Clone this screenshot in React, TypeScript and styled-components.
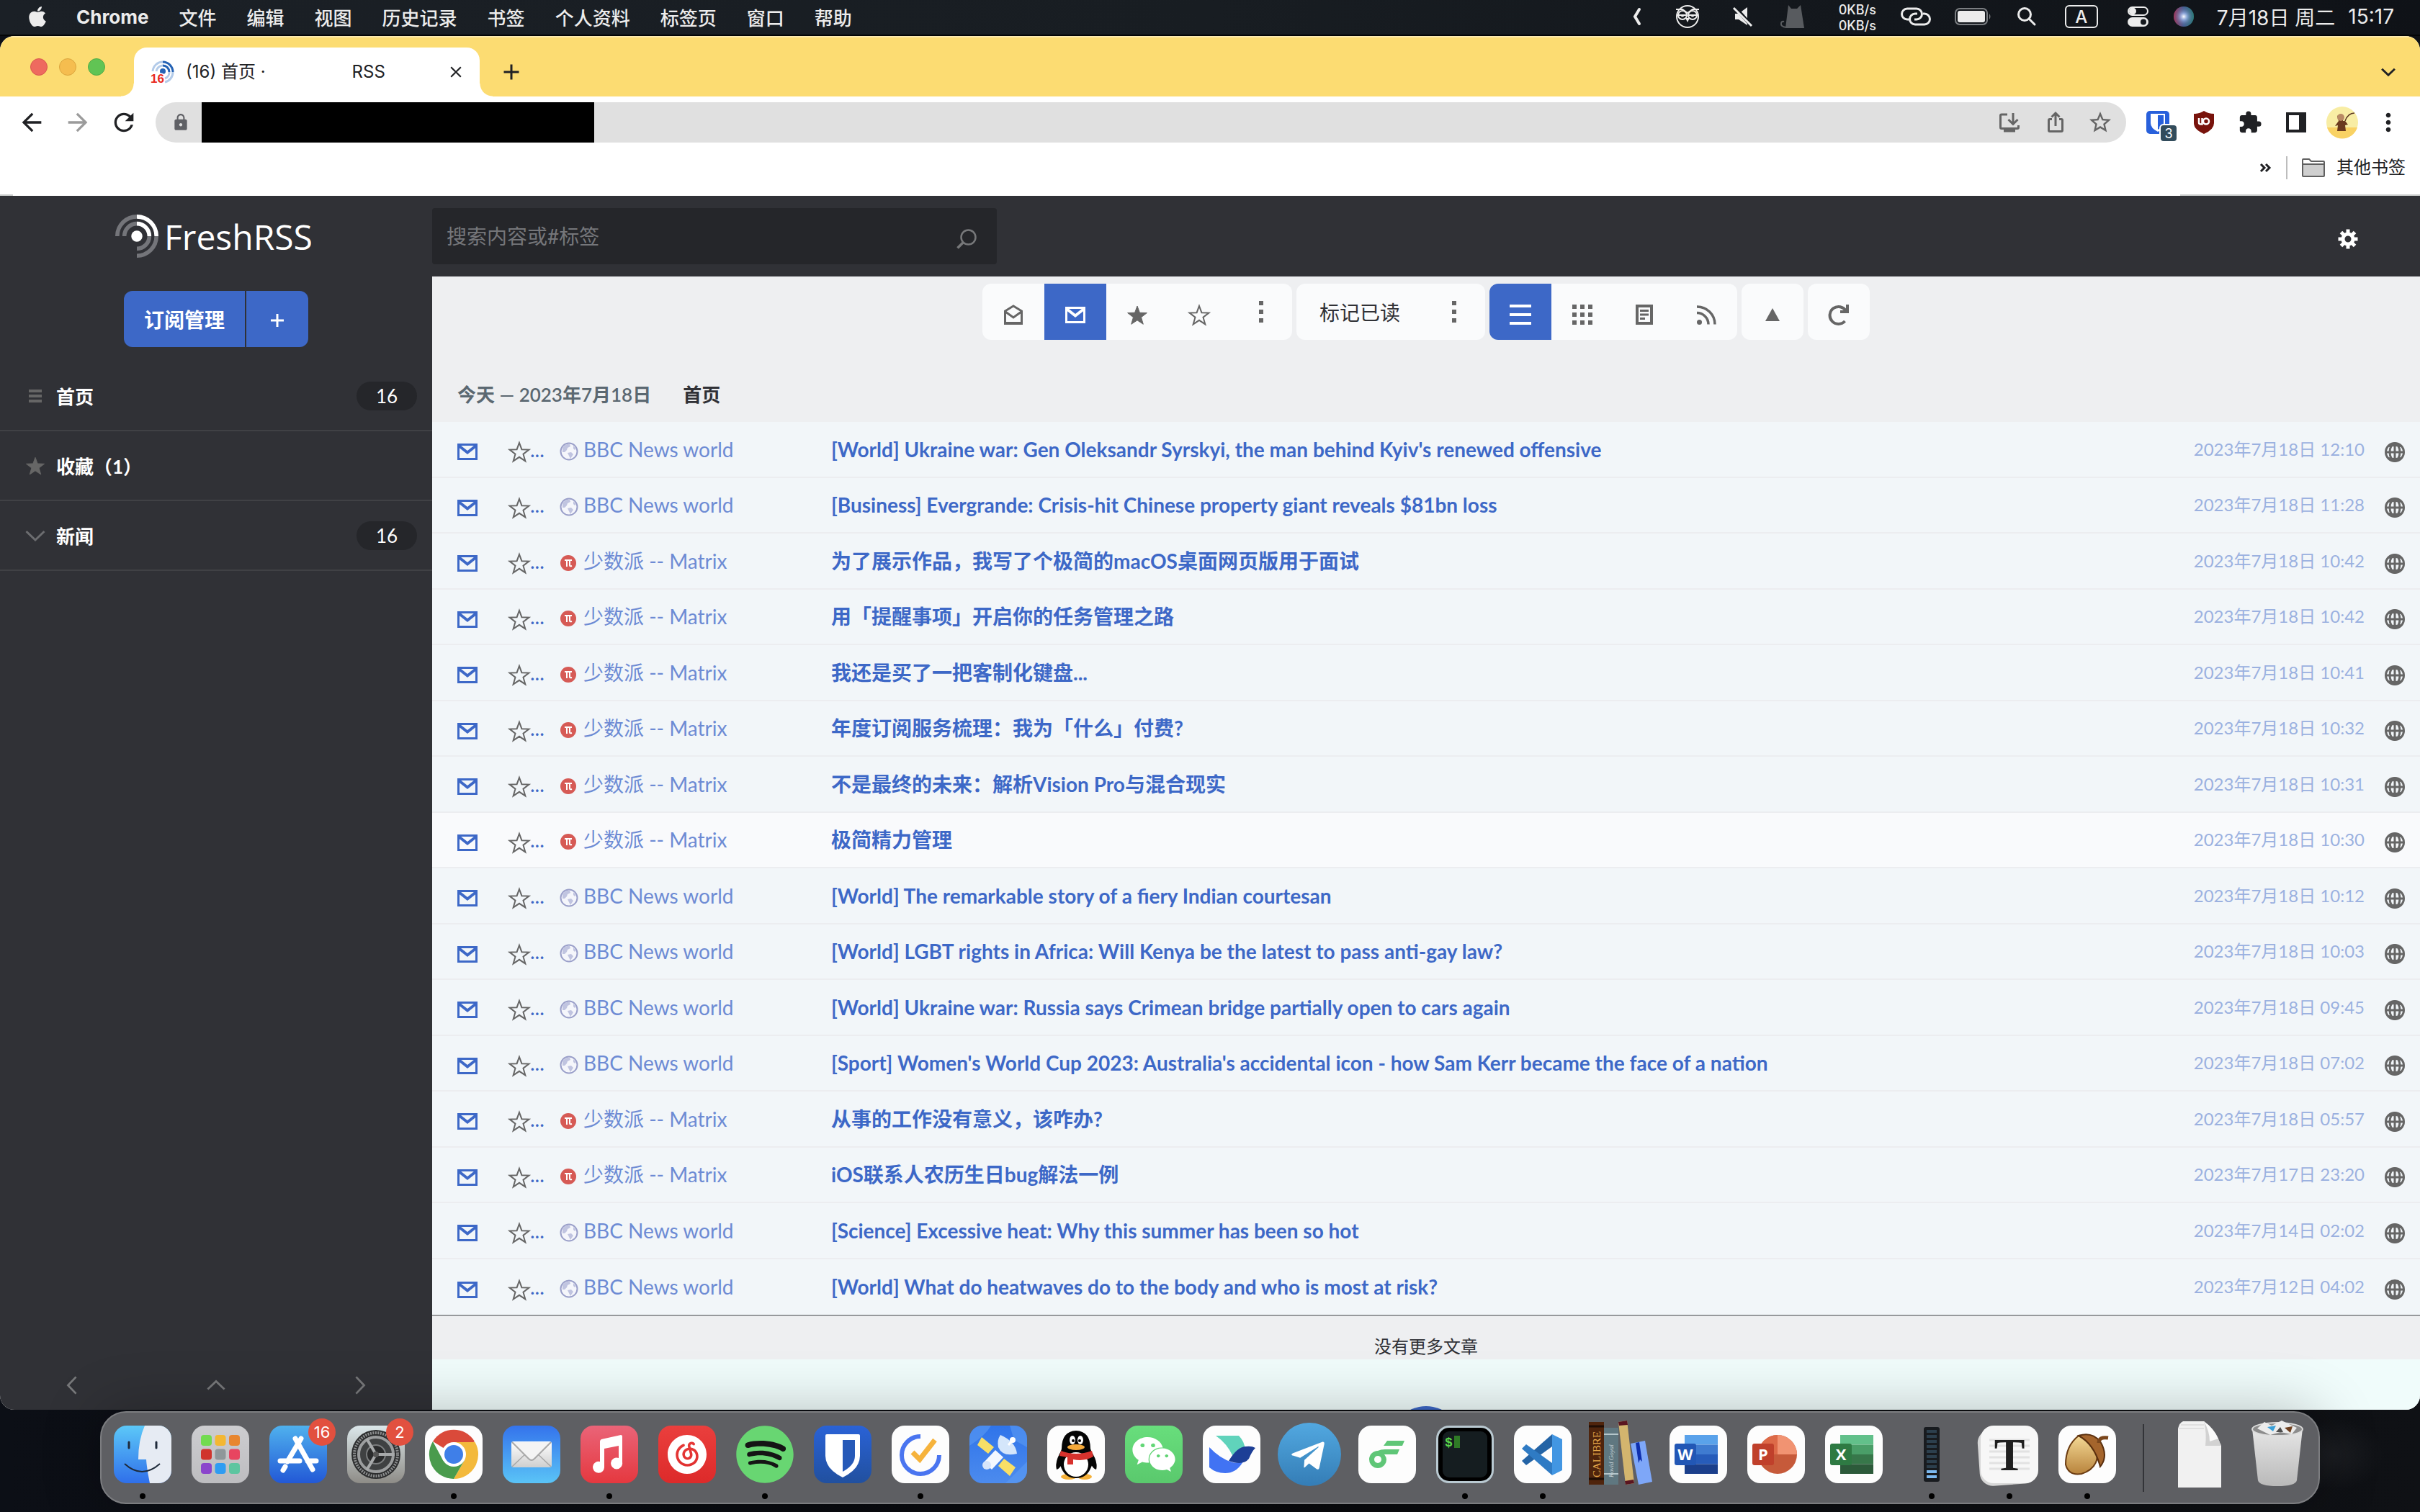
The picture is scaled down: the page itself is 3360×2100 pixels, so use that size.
import React from "react";
import styled, { createGlobalStyle } from "styled-components";
import { FaApple, FaSpotify, FaWeixin, FaTelegramPlane } from "react-icons/fa";
import { MdArrowBack, MdArrowForward, MdRefresh, MdLock, MdExtension, MdMoreVert, MdClose, MdAdd, MdOutlineStarBorder } from "react-icons/md";
import { SiNeteasecloudmusic } from "react-icons/si";

const UI = `Inter, "Noto Sans CJK SC", sans-serif`;
const READER = `Lato, "Noto Sans CJK SC", sans-serif`;
const BLUE = "#3d68c7";
const DARK = "#303136";
const DEEP = "#25262a";
const GREY = "#666666";

const Global = createGlobalStyle`
  *, *::before, *::after { box-sizing: border-box; }
  html, body, #root { height: 100%; margin: 0; }
  body { background: #0a0c10; font-family: ${UI}; }
  button, input { font: inherit; border: 0; padding: 0; background: none; color: inherit; border-radius: 0; outline: 0; }
  a { color: inherit; text-decoration: none; }
  ul { list-style: none; margin: 0; padding: 0; }
  svg { display: block; flex: none; overflow: visible; }
`;

const Desktop = styled.div`
  min-height: 100vh;
  display: flex;
  flex-direction: column;
  background:
    radial-gradient(ellipse 70px 50px at calc(100% - 120px) calc(100% - 80px), #1b1d21, transparent),
    linear-gradient(90deg, #0c0f16, #090a0d 50%, #0f1115);
`;

/* ---------- system menu bar ---------- */
const MenuBar = styled.header`
  height: 50px;
  padding: 0 36px 2px;
  display: flex;
  align-items: center;
  justify-content: space-between;
  color: #ececec;
  font-size: 26px;
  background: linear-gradient(90deg, #1b2026, #181d22 50%, #0f1217);
  border-bottom: 2px solid #040506;
`;
const MenuList = styled.nav`
  display: flex;
  align-items: center;
  gap: 42px;
`;
const AppleMenu = styled.button`
  margin-right: -4px;
`;
const MenuItem = styled.button<{ $strong?: boolean }>`
  font-weight: ${(p) => (p.$strong ? 700 : 500)};
  white-space: nowrap;
`;
const StatusList = styled.div`
  display: flex;
  align-items: center;
`;
const Status = styled.span<{ $lead: number }>`
  display: flex;
  margin-left: ${(p) => p.$lead}px;
  white-space: nowrap;
`;
const Clock = styled.time<{ $lead: number }>`
  margin-left: ${(p) => p.$lead}px;
  font-size: 28px;
  white-space: nowrap;
`;
const NetSpeed = styled.span<{ $lead: number }>`
  margin-left: ${(p) => p.$lead}px;
  padding-top: 4px;
  font-size: 18px;
  line-height: 22px;
  font-weight: 500;
`;
const InputMode = styled.span<{ $lead: number }>`
  margin-left: ${(p) => p.$lead}px;
  width: 46px;
  height: 32px;
  border: 2px solid #ececec;
  border-radius: 6px;
  display: grid;
  place-items: center;
  font-size: 24px;
  font-weight: 500;
`;

/* ---------- browser chrome ---------- */
const Window = styled.section`
  flex: 1;
  display: flex;
  flex-direction: column;
  border-radius: 20px;
  overflow: hidden;
  background: #fff;
`;
const TabStrip = styled.div`
  height: 84px;
  background: #fcdc72;
  border-top: 2px solid #fbe9ae;
  display: flex;
  align-items: flex-end;
  padding-right: 34px;
`;
const Lights = styled.div`
  width: 186px;
  padding-left: 42px;
  padding-bottom: 29px;
  display: flex;
  gap: 16px;
`;
const Light = styled.button<{ $c: string; $b: string }>`
  width: 24px;
  height: 24px;
  border-radius: 50%;
  background: ${(p) => p.$c};
  border: 1px solid ${(p) => p.$b};
`;
const Tab = styled.div`
  position: relative;
  width: 480px;
  height: 68px;
  border-radius: 18px 18px 0 0;
  background: #fff;
  display: flex;
  align-items: center;
  padding: 0 20px 0 23px;
  font-size: 24px;
  color: #202124;
  &::before, &::after {
    content: "";
    position: absolute;
    bottom: 0;
    width: 18px;
    height: 18px;
  }
  &::before { left: -18px; background: radial-gradient(circle at 0 0, transparent 17px, #fff 18px); }
  &::after { right: -18px; background: radial-gradient(circle at 100% 0, transparent 17px, #fff 18px); }
`;
const TabTitle = styled.span`
  flex: 1;
  margin-left: 16px;
  display: flex;
  align-items: baseline;
  gap: 120px;
  line-height: 32px;
  white-space: pre;
`;
const StripButton = styled.button<{ $push?: boolean }>`
  display: flex;
  align-items: center;
  height: 68px;
  margin-left: ${(p) => (p.$push ? "auto" : "26px")};
  color: #202124;
`;
const IconButton = styled.button<{ $c?: string; $low?: boolean }>`
  display: flex;
  padding-top: ${(p) => (p.$low ? 8 : 0)}px;
  color: ${(p) => p.$c ?? "#202124"};
`;
const AddressBar = styled.div`
  height: 72px;
  padding: 8px 24px;
  display: flex;
  align-items: center;
  gap: 24px;
`;
const Omnibox = styled.label`
  flex: 1;
  height: 56px;
  border-radius: 28px;
  background: #e0e0e0;
  display: flex;
  align-items: center;
  gap: 24px;
  padding: 0 18px 0 22px;
`;
const UrlField = styled.input`
  width: 545px;
  height: 56px;
  margin-left: -8px;
  margin-right: auto;
  background: #000;
  color: #000;
`;
const Extensions = styled.div`
  width: 384px;
  display: grid;
  grid-template-columns: repeat(6, 64px);
  justify-items: center;
  align-items: center;
  margin: 0 -12px 0 -12px;
`;
const ExtBadge = styled.span`
  position: absolute;
  right: -12px;
  bottom: -12px;
  width: 26px;
  height: 26px;
  border: 2px solid #fff;
  border-radius: 6px;
  background: #324c5c;
  color: #fff;
  font-size: 18px;
  display: grid;
  place-items: center;
`;
const ExtSlot = styled.button`
  position: relative;
  display: flex;
`;
const Bookmarks = styled.div`
  height: 66px;
  padding: 0 20px 10px;
  border-bottom: 2px solid #c9cccb;
  border-image: linear-gradient(90deg, #c9cccb 19px, #fff 19px calc(100% - 334px), #c9cccb 0) 1;
  display: flex;
  justify-content: flex-end;
  align-items: center;
  font-size: 24px;
  line-height: 32px;
  color: #202124;
`;
const BookmarkRule = styled.span`
  width: 2px;
  height: 32px;
  background: #bdbdbd;
  margin: 0 20px 0 22px;
`;
const Folder = styled.button`
  display: flex;
  align-items: center;
  gap: 16px;
`;

/* ---------- reader ---------- */
const Reader = styled.main`
  flex: 1;
  display: grid;
  grid-template-columns: 600px 1fr;
  background: ${DARK};
  font-family: ${READER};
`;
const Sidebar = styled.aside`
  display: flex;
  flex-direction: column;
  align-items: center;
  color: #fff;
`;
const Brand = styled.a`
  height: 112px;
  width: 100%;
  padding-left: 160px;
  display: flex;
  align-items: center;
  gap: 8px;
  font: 48px "Open Sans", sans-serif;
`;
const Manage = styled.div`
  margin: 20px 0;
  display: flex;
  gap: 2px;
  height: 78px;
  border-radius: 12px;
  overflow: hidden;
  font-size: 28px;
  font-weight: 700;
`;
const ManageButton = styled.button<{ $w: number }>`
  width: ${(p) => p.$w}px;
  background: ${BLUE};
  display: grid;
  place-items: center;
`;
const Categories = styled.ul`
  width: 100%;
`;
const Category = styled.li`
  height: 97px;
  border-bottom: 2px solid #404145;
  display: flex;
  align-items: center;
  padding: 0 21px 0 35px;
  font-size: 26px;
  font-weight: 700;
`;
const CategoryLink = styled.a`
  display: flex;
  align-items: center;
  gap: 15px;
  flex: 1;
`;
const Count = styled.span`
  width: 84px;
  height: 40px;
  border-radius: 20px;
  background: ${DEEP};
  display: grid;
  place-items: center;
  font-weight: 400;
`;
const SideNav = styled.div`
  margin-top: auto;
  width: 100%;
  height: 68px;
  display: grid;
  grid-template-columns: repeat(3, 1fr);
  justify-items: center;
  align-items: center;
`;
const Column = styled.div`
  display: flex;
  flex-direction: column;
  min-width: 0;
`;
const TopBar = styled.div`
  height: 112px;
  display: flex;
  align-items: center;
  justify-content: space-between;
  padding-right: 86px;
`;
const SearchBox = styled.form`
  width: 784px;
  height: 78px;
  padding: 0 28px 0 20px;
  border-radius: 4px;
  background: ${DEEP};
  display: flex;
  align-items: center;
  input { flex: 1; font-size: 28px; color: #fff; }
  input::placeholder { color: #75767a; opacity: 1; }
`;
const Content = styled.section`
  position: relative;
  flex: 1;
  display: flex;
  flex-direction: column;
  overflow: hidden;
  background: #eeeff1;
`;
const ActionBar = styled.div`
  padding: 10px 0 36px;
  display: flex;
  justify-content: center;
  gap: 6px;
`;
const Group = styled.div`
  display: flex;
  height: 78px;
  border-radius: 12px;
  overflow: hidden;
  background: #fafbfc;
  color: ${GREY};
`;
const Action = styled.button<{ $on?: boolean; $wide?: boolean; $flat?: boolean }>`
  width: ${(p) => (p.$wide ? 176 : 86)}px;
  padding-top: ${(p) => (p.$flat || p.$wide ? 0 : 8)}px;
  display: grid;
  place-items: center;
  font-size: 28px;
  background: ${(p) => (p.$on ? BLUE : "transparent")};
  color: ${(p) => (p.$on ? "#fff" : p.$wide ? DARK : GREY)};
`;
const DayTitle = styled.h2`
  margin: 0;
  height: 78px;
  padding: 0 0 2px 35px;
  display: flex;
  align-items: center;
  gap: 44px;
  font-size: 26px;
  font-weight: 600;
  color: #5b6871;
  b { color: ${DARK}; font-weight: 600; }
`;
const Articles = styled.ul`
  flex: 1;
  display: grid;
  grid-auto-rows: 1fr;
`;
const Article = styled.li<{ $hover?: boolean }>`
  display: grid;
  grid-template-columns: 71px 71px 377px 1fr auto 28px;
  align-items: center;
  padding: 0 21px 0 35px;
  background: ${(p) => (p.$hover ? "#f9fafc" : "#f2f6f9")};
  border-bottom: 2px solid #ecedf0;
  color: ${BLUE};
  font-size: 28px;
  line-height: 36px;
  white-space: nowrap;
  &:last-child { border-bottom: 0; }
`;
const RowIcon = styled.button`
  display: flex;
  padding-top: 8px;
`;
const StarCell = styled.button`
  display: flex;
  align-items: center;
  color: ${GREY};
  svg { margin-top: 8px; }
  span { color: ${BLUE}; }
`;
const Feed = styled.a`
  display: flex;
  align-items: center;
  gap: 7px;
  color: #6d8bd4;
  svg { margin-top: 6px; }
`;
const Title = styled.a`
  font-weight: 700;
`;
const Time = styled.time`
  margin-right: 28px;
  font-size: 24px;
  color: #9bb1e0;
`;
const EndNote = styled.p`
  margin: 0;
  height: 62px;
  padding-top: 24px;
  border-top: 2px solid #97999c;
  text-align: center;
  font-size: 24px;
  line-height: 36px;
  color: ${DARK};
`;
const PageEnd = styled.div`
  height: 70px;
  background: #f0fcfb;
`;
const Bubble = styled.span`
  position: absolute;
  left: 50%;
  top: calc(100% - 5px);
  width: 100px;
  height: 100px;
  margin-left: -50px;
  border-radius: 50%;
  background: ${BLUE};
`;

/* ---------- dock ---------- */
const DockArea = styled.footer`
  height: 142px;
  padding-top: 2px;
  display: flex;
  justify-content: center;
  align-items: flex-start;
`;
const Dock = styled.div`
  position: relative;
  height: 129px;
  padding: 18px 3px 0;
  border: 2px solid #7c7d80;
  border-radius: 36px;
  background: #5e5f63;
  box-shadow: 0 0 80px rgba(0, 0, 0, 0.25);
  display: flex;
`;
const DockItem = styled.button`
  position: relative;
  width: 108px;
  display: flex;
  flex-direction: column;
  align-items: center;
  justify-content: flex-start;
  gap: 14px;
`;
const RunDot = styled.i`
  width: 8px;
  height: 8px;
  border-radius: 50%;
  background: #000;
`;
const Alert = styled.span`
  position: absolute;
  left: 68px;
  top: -10px;
  width: 38px;
  height: 38px;
  border-radius: 50%;
  background: #e2503f;
  color: #fff;
  font-size: 22px;
  display: grid;
  place-items: center;
`;
const Divider = styled.span`
  width: 2px;
  height: 94px;
  margin: -2px 23px 0;
  background: #333438;
`;

/* ---------- drawings ---------- */
const STAR = "M15 2 L18.4 11.2 L28.4 11.6 L20.5 17.7 L23.3 27.3 L15 21.8 L6.7 27.3 L9.5 17.7 L1.6 11.6 L11.6 11.2 Z";
const Star = ({ fill = "none", w = 2 }: { fill?: string; w?: number }) => (
  <svg width="30" height="29" viewBox="0 0 30 29"><path d={STAR} fill={fill} stroke="currentColor" strokeWidth={w} /></svg>
);
const Envelope = () => (
  <svg width="28" height="23" viewBox="0 0 28 23" fill="none" stroke="currentColor">
    <rect x="1.5" y="1.5" width="25" height="20" strokeWidth="3" />
    <path d="M2 3 L14 12.5 L26 3" strokeWidth="4" />
  </svg>
);
const OpenEnvelope = () => (
  <svg width="26" height="28" viewBox="0 0 26 28" fill="none" stroke="currentColor" strokeWidth="3">
    <path d="M1.5 26 V9 L13 2 L24.5 9 V26 Z" /><path d="M2 10 L13 18 L24 10" /><path d="M0 26 H26" strokeWidth="4" />
  </svg>
);
const Dots = () => (
  <svg width="6" height="30" viewBox="0 0 6 30" fill="currentColor"><path d="M0 0h6v6H0zM0 12h6v6H0zM0 24h6v6H0z" /></svg>
);
const Lines = () => (
  <svg width="30" height="28" viewBox="0 0 30 28" fill="currentColor"><path d="M0 0h30v4H0zM0 12h30v4H0zM0 24h30v4H0z" /></svg>
);
const Grid9 = () => (
  <svg width="28" height="28" viewBox="0 0 28 28" fill="currentColor">
    {[0, 11, 22].map((y) => [0, 11, 22].map((x) => <rect key={`${x}-${y}`} x={x} y={y} width="6" height="6" />))}
  </svg>
);
const Page = () => (
  <svg width="24" height="28" viewBox="0 0 24 28" fill="none" stroke="currentColor">
    <path d="M2 2 H22 V26 H2 Z" strokeWidth="4" /><path d="M6 8.5 H18 M6 14 H18 M6 19.5 H13" strokeWidth="3" />
  </svg>
);
const Rss = () => (
  <svg width="27" height="27" viewBox="0 0 27 27" fill="none" stroke="currentColor" strokeWidth="3.5">
    <circle cx="3.5" cy="23.5" r="3.5" fill="currentColor" stroke="none" />
    <path d="M0 10.5 A16 16 0 0 1 16 26.5 M0 2 A24.5 24.5 0 0 1 25 26.5" />
  </svg>
);
const Reload = () => (
  <svg width="28" height="28" viewBox="0 0 28 28" fill="none" stroke="currentColor">
    <path d="M24 9 A12 12 0 1 0 22.5 23" strokeWidth="4" /><path d="M26 0 V10 H16" strokeWidth="4" />
  </svg>
);
const Globe = () => (
  <svg width="28" height="28" viewBox="0 0 28 28" fill="none" stroke={GREY}>
    <circle cx="14" cy="14" r="12.5" strokeWidth="3" />
    <path d="M14 1 V27 M1 14 H27" strokeWidth="3" />
    <ellipse cx="14" cy="14" rx="7" ry="12" strokeWidth="3" />
    <path d="M4 6 Q14 -4 24 6 L21 7 Q14 5 7 7 Z M4 22 Q14 32 24 22 L21 21 Q14 23 7 21 Z" fill={GREY} stroke="none" />
  </svg>
);
const WorldIcon = () => (
  <svg width="26" height="26" viewBox="0 0 26 26">
    <circle cx="13" cy="13" r="11.5" fill="#f5f6fb" stroke="#9a9fc9" strokeWidth="2" />
    <path d="M4 8 Q8 2 14 3 L15 6 L11 8 L10 11 L7 14 L4 14 Z M11 15 L16 14 L19 17 L17 20 L15 23 L13 19 Z M19 5 L23 9 L21 11 L19 9 Z" fill="#c0c4e0" />
  </svg>
);
const PiIcon = () => (
  <svg width="26" height="26" viewBox="0 0 26 26">
    <circle cx="12" cy="13" r="11" fill="#d65a55" />
    <path d="M7 9 H17 M10 9 V18 M14 9 V16 Q14 18 17 17" stroke="#fff" strokeWidth="2" fill="none" />
  </svg>
);
const Signal = ({ size, bright, dim }: { size: number; bright: string; dim: string }) => (
  <svg width={size} height={size} viewBox="0 0 256 256" fill="none" strokeWidth="24">
    <circle cx="128" cy="128" r="33" fill={bright} />
    <path stroke={dim} d="M12 128 A116 116 0 0 1 128 12 M54 128 A74 74 0 0 1 128 54 M244 128 A116 116 0 0 1 128 244 M202 128 A74 74 0 0 1 128 202" />
    <path stroke={bright} d="M128 12 A116 116 0 0 1 244 128 M128 54 A74 74 0 0 1 202 128" />
  </svg>
);
const Chevron = ({ turn, size = 28, w = 2 }: { turn: number; size?: number; w?: number }) => (
  <svg width={size} height={size} viewBox="0 0 28 28" fill="none" stroke="currentColor" strokeWidth={w}>
    <path transform={`rotate(${turn} 14 14)`} d="M1.5 8 L14 20 L26.5 8" />
  </svg>
);
const Gear = () => (
  <svg width="28" height="28" viewBox="-14 -14 28 28">
    {[0, 45, 90, 135].map((a) => <rect key={a} x="-2.5" y="-13.5" width="5" height="27" fill="#fff" transform={`rotate(${a})`} />)}
    <circle r="7" fill={DARK} stroke="#fff" strokeWidth="5" />
  </svg>
);

/* ---------- dock drawings, each on an 80 unit tile ---------- */
const Tile = ({ fill = "#fdfdfd", children }: { fill?: string; children?: React.ReactNode }) => (
  <svg width="80" height="80" viewBox="0 0 80 80">
    <rect width="80" height="80" rx="18" fill={fill} />
    {children}
  </svg>
);
const Gradients = () => (
  <svg width="0" height="0" aria-hidden>
    <defs>
      {([
        ["gFinder", "#5cc8f8", "#2f6fea"], ["gPad", "#cdcdd0", "#bdbdc0"], ["gStore", "#4fb1ee", "#2258d6"],
        ["gPrefs", "#dbe7ea", "#8e8c87"], ["gMail", "#3473ec", "#5ac4f7"], ["gMusic", "#ea6478", "#e5383f"],
        ["gNet", "#ea3f3d", "#dd2a2a"], ["gBit", "#2a62d6", "#21509f"], ["gMap", "#2f74ea", "#4c8bee"],
        ["gChat", "#68de7c", "#5ac96d"], ["gTele", "#52a8e0", "#347db6"], ["gEnv", "#ffffff", "#cfcfcf"],
        ["gNut", "#f4d995", "#b8833c"], ["gBin", "#e6e6e6", "#b9b9b9"],
      ] as const).map(([id, a, b]) => (
        <linearGradient key={id} id={id} x1="0" y1="0" x2="0" y2="1"><stop offset="0" stopColor={a} /><stop offset="1" stopColor={b} /></linearGradient>
      ))}
    </defs>
  </svg>
);
const Finder = () => (
  <Tile fill="url(#gFinder)">
    <path d="M43 0 H62 A18 18 0 0 1 80 18 V62 A18 18 0 0 1 62 80 H50 Q46 62 45 47 H34 Q34 20 43 0Z" fill="#e6ebf3" />
    <path d="M21 23 V31 M59 23 V31" stroke="#1e2a3a" strokeWidth="3" strokeLinecap="round" />
    <path d="M15 53 Q39 75 64 53" stroke="#1e2a3a" strokeWidth="2" fill="none" />
  </Tile>
);
const Launchpad = () => (
  <Tile fill="url(#gPad)">
    {["#72db50", "#f3b732", "#e8862f", "#d0342c", "#8f979a", "#e84560", "#8b45cc", "#2f9cf2", "#5cc5a0"].map((c, i) => (
      <rect key={c} x={13 + (i % 3) * 19.5} y={13 + Math.floor(i / 3) * 19.5} width="15" height="15" rx="4" fill={c} />
    ))}
  </Tile>
);
const AppStore = () => (
  <Tile fill="url(#gStore)">
    <path d="M44 18 L25 50 M36 18 L60 61 M15 49 H42 M53 49 H65 M22 57 L19 62" stroke="#fff" strokeWidth="7" strokeLinecap="round" />
  </Tile>
);
const Prefs = () => (
  <Tile fill="url(#gPrefs)">
    <circle cx="40" cy="40" r="34" fill="#2c2d2e" />
    <circle cx="40" cy="40" r="30" fill="none" stroke="#8b8d8e" strokeWidth="4" strokeDasharray="2 1.5" />
    <circle cx="40" cy="40" r="24" fill="#3f4142" stroke="#9b9d9e" strokeWidth="4" />
    <circle cx="40" cy="40" r="13" fill="#2a2b2c" stroke="#7b7d7e" strokeWidth="2" />
    <path d="M40 40 H66 M40 40 L27 18 M40 40 L27 62" stroke="#a7a9aa" strokeWidth="4" />
    <circle cx="40" cy="40" r="4" fill="#555" />
  </Tile>
);
const Chrome = () => (
  <Tile>
    <path d="M40 40 L11 22 A34 34 0 0 1 69 22 Z" fill="#da4a3a" />
    <path d="M40 23 H69.5 A34 34 0 0 1 40 74 L54.7 48.5 Z" fill="#f3b93c" />
    <path d="M25.3 48.5 L11 22 A34 34 0 0 0 40 74 L54.7 48.5 Z" fill="#4a9b4d" />
    <circle cx="40" cy="40" r="17" fill="#fff" /><circle cx="40" cy="40" r="13" fill="#3f7fe8" />
  </Tile>
);
const Mail = () => (
  <Tile fill="url(#gMail)">
    <rect x="12" y="22" width="56" height="36" rx="3" fill="url(#gEnv)" />
    <path d="M13 57 L33 38 M67 57 L47 38" stroke="#a8a8a8" strokeWidth="1.5" />
    <path d="M13 23 L36 46 Q40 50 44 46 L67 23" fill="#f4f4f4" stroke="#a8a8a8" strokeWidth="2" />
  </Tile>
);
const Music = () => (
  <Tile fill="url(#gMusic)">
    <path d="M27 22 Q27 20 29 19 L56 13 Q58 13 58 15 V51 A8 8 0 1 1 53 45 V28 L33 32 V57 A8 8 0 1 1 27 50 Z" fill="#fff" />
  </Tile>
);
const NetEase = () => (
  <Tile fill="url(#gNet)"><SiNeteasecloudmusic x={13} y={13} size={54} color="#fff" /></Tile>
);
const Spotify = () => (
  <svg width="80" height="80" viewBox="0 0 80 80"><circle cx="40" cy="40" r="38" fill="#151515" /><FaSpotify x={-1} y={-1} size={82} color="#68d672" /></svg>
);
const Bitwarden = () => (
  <Tile fill="url(#gBit)">
    <path d="M18 12 H62 Q64 12 64 14 V42 Q64 60 40 72 Q16 60 16 42 V14 Q16 12 18 12Z" fill="#fff" /><path d="M40 20 H57 V42 Q57 55 40 64Z" fill="#2659b8" />
  </Tile>
);
const TickTick = () => (
  <Tile>
    <path d="M40 15 A26 26 0 1 0 66 41" stroke="#4a75f0" strokeWidth="6" fill="none" />
    <path d="M29 37 L39 47 L60 20" stroke="#f6b33c" strokeWidth="7" fill="none" />
  </Tile>
);
const Satellite = () => (
  <Tile fill="url(#gMap)">
    <path d="M0 28 Q22 14 30 0 H18 A18 18 0 0 0 0 18Z M50 80 L80 50 V62 A18 18 0 0 1 62 80Z M56 0 L62 20 L80 30 V18 A18 18 0 0 0 62 0Z" fill="#5b9bf2" opacity="0.6" />
    <path d="M17 16 L34 30 L26 39 L11 27Z M48 46 L64 58 L56 70 L40 56Z" fill="#f8df66" />
    <path d="M36 34 L47 44 L31 61 L20 51Z" fill="#f3f8ff" /><circle cx="24" cy="55" r="6" fill="#d7e5fa" />
    <path d="M43 13 Q64 22 66 39 Q46 44 40 30Q38 20 43 13Z" fill="#d4e6fb" /><path d="M54 27 L61 19" stroke="#fff" strokeWidth="3" /><circle cx="60" cy="20" r="4" fill="#fff" />
  </Tile>
);
const QQ = () => (
  <Tile>
    <ellipse cx="30" cy="71" rx="11" ry="4" fill="#f5b13a" /><ellipse cx="52" cy="71" rx="10" ry="4" fill="#f5b13a" />
    <path d="M20 34 Q10 50 13 61 Q17 60 20 54 M60 34 Q71 50 68 61 Q64 60 61 54" fill="#050505" />
    <path d="M40 7 Q60 8 60 32 Q66 50 60 60 Q54 73 40 73 Q26 73 20 60 Q15 50 20 32 Q20 8 40 7Z" fill="#050505" />
    <ellipse cx="40" cy="54" rx="17" ry="17" fill="#fff" />
    <ellipse cx="35" cy="20" rx="4" ry="6" fill="#fff" /><ellipse cx="46" cy="20" rx="4" ry="6" fill="#fff" />
    <circle cx="36" cy="21" r="2" fill="#000" /><circle cx="45" cy="21" r="2" fill="#000" />
    <ellipse cx="40" cy="30" rx="12" ry="4" fill="#f5a93a" />
    <path d="M19 35 Q40 43 62 35 L64 43 Q52 50 36 47 V54 H28 V44 L17 42Z" fill="#d8322d" />
  </Tile>
);
const WeChat = () => (
  <Tile fill="url(#gChat)"><FaWeixin x={9} y={9} size={62} color="#fff" /></Tile>
);
const Lark = () => (
  <Tile>
    <path d="M18 14 H50 Q58 22 59 34 Q50 35 42 43 Q34 25 18 14Z" fill="#60d3bb" />
    <path d="M9 30 Q24 46 41 51 Q50 53 57 48 Q48 66 31 66 Q18 66 9 58Z" fill="#4173f3" />
    <path d="M36 49 Q48 29 60 29 Q68 28 73 31 Q68 36 64 46 Q56 56 36 49Z" fill="#1d3f96" />
  </Tile>
);
const Telegram = () => (
  <svg width="80" height="80" viewBox="0 0 80 80"><circle cx="40" cy="40" r="44" fill="url(#gTele)" /><FaTelegramPlane x={12} y={16} size={52} color="#fff" /></svg>
);
const Flomo = () => (
  <Tile>
    <path d="M40 21 H64 L61 28 H35Z M37 33 H57 L54 40 H36 Q39 44 39 47 A12 12 0 1 1 27 35 Q31 33 37 33Z" fill="#5fc677" />
    <circle cx="27" cy="47" r="5" fill="#fdfdfd" />
  </Tile>
);
const Terminal = () => (
  <svg width="80" height="80" viewBox="0 0 80 80">
    <rect width="80" height="80" rx="18" fill="#b9c9d1" /><rect x="3" y="3" width="74" height="74" rx="15" fill="#000" /><rect x="9" y="8" width="62" height="64" rx="9" fill="#151d20" />
    <text x="12" y="29" fill="#5bd64b" fontSize="18" fontFamily="Liberation Mono, monospace" fontWeight="700">$</text><rect x="25" y="14" width="8" height="17" fill="#2f7a26" />
  </svg>
);
const Code = () => (
  <Tile>
    <path d="M53 12 L67 19 V62 L53 69Z" fill="#4296e2" />
    <path d="M53 12 V29 L17 55 L11 49Z" fill="#2464a6" /><path d="M53 69 V52 L17 26 L11 32Z" fill="#2f7bc4" />
  </Tile>
);
const Calibre = () => (
  <svg width="80" height="80" viewBox="0 0 80 80">
    <rect x="-4" y="-5" width="21" height="87" fill="#4f240c" /><path d="M-4 1 H17 M-4 74 H17" stroke="#1f0d04" strokeWidth="3" />
    <text transform="translate(12 72) rotate(-90)" fill="#e8a94b" fontSize="15" fontFamily="Liberation Serif, serif">CALIBRE</text>
    <rect x="17" y="3" width="20" height="79" fill="#5f7780" /><path d="M17 12 H37 M17 67 H37" stroke="#b5c6cb" strokeWidth="2" />
    <text transform="translate(30 72) rotate(-90)" fill="#c7d4d8" fontSize="9" fontStyle="italic" fontFamily="Liberation Serif, serif">Kovid Goyal</text>
    <path d="M37 -5 L49 -7 L59 80 L47 82Z" fill="#d3b56e" /><path d="M37 -5 L49 -7 L50 -1 L38 0Z M46 77 L58 75 L59 80 L47 82Z" fill="#5a1520" />
    <path d="M54 25 L74 21 L84 78 L65 82Z" fill="#7ea7f8" /><path d="M61 24 L66 23 L70 50 L67 47 L65 52Z" fill="#0e2fae" />
  </svg>
);
const Office = ({ letter, tones, badge, round }: { letter: string; tones: string[]; badge: string; round?: boolean }) => (
  <Tile>
    {round ? (
      <g><circle cx="42" cy="40" r="27" fill={tones[2]} /><path d="M42 13 A27 27 0 0 1 69 40 H42Z" fill={tones[0]} /><path d="M42 13 A27 27 0 0 0 15 40 H42Z" fill={tones[1]} /></g>
    ) : (
      <g>{tones.map((t, i) => <rect key={t} x="21" y={13 + i * 13.5} width="46" height="13.5" fill={t} />)}</g>
    )}
    <rect x="7" y="25" width="30" height="30" rx="3" fill={badge} />
    <text x="22" y="48" textAnchor="middle" fill="#fff" fontSize="22" fontWeight="700" fontFamily="Open Sans, sans-serif">{letter}</text>
  </Tile>
);
const Meter = () => (
  <svg width="80" height="80" viewBox="0 0 80 80">
    <rect x="29" y="2" width="22" height="76" rx="3" fill="#181b1f" />
    {[...Array(10)].map((_, i) => <rect key={i} x="33" y={6 + i * 7} width="14" height="4" fill={i > 7 ? "#7cb9f0" : "#2c3f4d"} />)}
  </svg>
);
const Typora = () => (
  <svg width="80" height="80" viewBox="0 0 80 80">
    <rect x="-3" y="4" width="80" height="78" rx="18" fill="#d7d7d7" transform="rotate(-4 40 40)" /><rect width="80" height="80" rx="18" fill="#f7f7f7" />
    <path d="M12 20 H68 M12 28 H68 M12 36 H68 M12 44 H68 M12 52 H68 M12 60 H68" stroke="#e2e2e2" strokeWidth="3" />
    <text x="40" y="62" textAnchor="middle" fill="#1f1f1f" fontSize="64" fontFamily="Liberation Serif, serif" fontWeight="700">T</text>
  </svg>
);
const Acorn = () => (
  <Tile>
    <path d="M28 14 Q44 12 54 40 Q54 60 32 67 Q14 70 10 54 Q10 28 28 14Z" fill="url(#gNut)" stroke="#6b3c12" strokeWidth="2" />
    <path d="M28 14 Q46 8 58 22 Q70 42 58 57 Q50 26 28 14Z" fill="#a5652c" stroke="#5a2f0e" strokeWidth="2" />
    <path d="M56 24 Q56 15 69 17" stroke="#7a461c" strokeWidth="5" fill="none" />
  </Tile>
);
const Papers = () => (
  <svg width="80" height="80" viewBox="0 0 80 80">
    <path d="M17 -6 H46 Q62 6 70 28 V86 H10 V4 Q12 -4 17 -6Z" fill="#f1f1f1" /><path d="M11 4 H46 M14 -1 H46" stroke="#cfcfcf" strokeWidth="1" />
    <path d="M46 -6 Q50 10 48 28 L70 28 Q62 6 46 -6Z" fill="#d2d2d2" /><path d="M46 -6 Q60 4 66 18 L54 22 Q54 8 46 -6Z" fill="#fafafa" />
  </svg>
);
const Trash = () => (
  <svg width="80" height="80" viewBox="0 0 80 80">
    <path d="M5 4 L13 76 Q15 84 40 84 Q65 84 67 76 L75 4Z" fill="url(#gBin)" />
    <ellipse cx="40" cy="5" rx="35" ry="9" fill="#8c8c8c" stroke="#dcdcdc" strokeWidth="2" />
    <path d="M12 4 L22 -5 L32 0 L46 -7 L56 -2 L67 3 L60 12 L44 9 L30 13Z" fill="#ececec" /><path d="M26 2 L34 8 L38 0Z" fill="#3a9fd8" /><path d="M50 3 L58 10 L61 1Z" fill="#70401f" /><path d="M38 9 L44 2 L48 9Z" fill="#4d4d4d" />
  </svg>
);

type DockEntry = { name: string; art: React.ReactNode; run?: boolean; alert?: string };
const apps: DockEntry[] = [
  { name: "Finder", art: <Finder />, run: true },
  { name: "Launchpad", art: <Launchpad /> },
  { name: "App Store", art: <AppStore />, alert: "16" },
  { name: "System Settings", art: <Prefs />, alert: "2" },
  { name: "Chrome", art: <Chrome />, run: true },
  { name: "Mail", art: <Mail /> },
  { name: "Music", art: <Music />, run: true },
  { name: "NetEase Music", art: <NetEase /> },
  { name: "Spotify", art: <Spotify />, run: true },
  { name: "Bitwarden", art: <Bitwarden /> },
  { name: "TickTick", art: <TickTick />, run: true },
  { name: "Satellite", art: <Satellite /> },
  { name: "QQ", art: <QQ /> },
  { name: "WeChat", art: <WeChat /> },
  { name: "Lark", art: <Lark /> },
  { name: "Telegram", art: <Telegram /> },
  { name: "flomo", art: <Flomo /> },
  { name: "iTerm", art: <Terminal />, run: true },
  { name: "VS Code", art: <Code />, run: true },
  { name: "calibre", art: <Calibre /> },
  { name: "Word", art: <Office letter="W" tones={["#5aa2ea", "#3f7bd0", "#275cba", "#1b3f8b"]} badge="#2257b5" /> },
  { name: "PowerPoint", art: <Office round letter="P" tones={["#f19372", "#dd6a48", "#c65a3a"]} badge="#c0402b" /> },
  { name: "Excel", art: <Office letter="X" tones={["#62c08a", "#4a9e68", "#37774a", "#2c5a3a"]} badge="#2e7a43" /> },
  { name: "Monitor", art: <Meter />, run: true },
  { name: "Typora", art: <Typora />, run: true },
  { name: "Acorn", art: <Acorn />, run: true },
];
const places: DockEntry[] = [
  { name: "Documents", art: <Papers /> },
  { name: "Trash", art: <Trash /> },
];

const DockButton = ({ entry }: { entry: DockEntry }) => (
  <DockItem aria-label={entry.name}>
    {entry.art}
    {entry.run && <RunDot />}
    {entry.alert && <Alert>{entry.alert}</Alert>}
  </DockItem>
);

const menus = ["文件", "编辑", "视图", "历史记录", "书签", "个人资料", "标签页", "窗口", "帮助"];

const BBC = "BBC News world";
const SSP = "少数派 -- Matrix";
const articles: [string, string, string][] = [
  [BBC, "[World] Ukraine war: Gen Oleksandr Syrskyi, the man behind Kyiv's renewed offensive", "2023年7月18日 12:10"],
  [BBC, "[Business] Evergrande: Crisis-hit Chinese property giant reveals $81bn loss", "2023年7月18日 11:28"],
  [SSP, "为了展示作品，我写了个极简的macOS桌面网页版用于面试", "2023年7月18日 10:42"],
  [SSP, "用「提醒事项」开启你的任务管理之路", "2023年7月18日 10:42"],
  [SSP, "我还是买了一把客制化键盘...", "2023年7月18日 10:41"],
  [SSP, "年度订阅服务梳理：我为「什么」付费?", "2023年7月18日 10:32"],
  [SSP, "不是最终的未来：解析Vision Pro与混合现实", "2023年7月18日 10:31"],
  [SSP, "极简精力管理", "2023年7月18日 10:30"],
  [BBC, "[World] The remarkable story of a fiery Indian courtesan", "2023年7月18日 10:12"],
  [BBC, "[World] LGBT rights in Africa: Will Kenya be the latest to pass anti-gay law?", "2023年7月18日 10:03"],
  [BBC, "[World] Ukraine war: Russia says Crimean bridge partially open to cars again", "2023年7月18日 09:45"],
  [BBC, "[Sport] Women's World Cup 2023: Australia's accidental icon - how Sam Kerr became the face of a nation", "2023年7月18日 07:02"],
  [SSP, "从事的工作没有意义，该咋办?", "2023年7月18日 05:57"],
  [SSP, "iOS联系人农历生日bug解法一例", "2023年7月17日 23:20"],
  [BBC, "[Science] Excessive heat: Why this summer has been so hot", "2023年7月14日 02:02"],
  [BBC, "[World] What do heatwaves do to the body and who is most at risk?", "2023年7月12日 04:02"],
];

const SystemMenu = () => (
  <MenuBar>
    <MenuList>
      <AppleMenu aria-label="Apple"><FaApple size={32} /></AppleMenu>
      <MenuItem $strong>Chrome</MenuItem>
      {menus.map((m) => <MenuItem key={m}>{m}</MenuItem>)}
    </MenuList>
    <StatusList>
      <Status $lead={0}><svg width="12" height="24" viewBox="0 0 12 24"><path d="M9 2 L3 12 L9 22" fill="none" stroke="#ececec" strokeWidth="4" strokeLinecap="round" /></svg></Status>
      <Status $lead={48}>
        <svg width="32" height="32" viewBox="0 0 32 32" fill="none" stroke="#ececec" strokeWidth="2">
          <circle cx="16" cy="16" r="15" /><circle cx="9" cy="14" r="6" /><circle cx="23" cy="14" r="6" /><path d="M0 6 H9 L16 11 L23 6 H32 M2 14 H15 M17 14 H30" /><path d="M13 18 L16 24 L19 18Z M6 14 H12 Q9 19 6 14 M20 14 H26 Q23 19 20 14" fill="#ececec" stroke="none" />
        </svg>
      </Status>
      <Status $lead={47}>
        <svg width="27" height="26" viewBox="0 0 27 26"><path d="M3 9 H8 L20 0 V25 L8 17 H3Z" fill="#ececec" /><path d="M2 -1 L27 27" stroke="#14181d" strokeWidth="5" /><path d="M1 1 L26 26" stroke="#ececec" strokeWidth="3" /></svg>
      </Status>
      <Status $lead={39}>
        <svg width="33" height="32" viewBox="0 0 33 32"><path d="M11 0 L15 5 H23 L28 0 L33 32 H7Z" fill="#585b5f" /><path d="M8 31 Q0 30 1 25 Q2 22 5 23" stroke="#585b5f" strokeWidth="2" fill="none" /></svg>
      </Status>
      <NetSpeed $lead={48}>0KB/s<br />0KB/s</NetSpeed>
      <Status $lead={34}>
        <svg width="42" height="26" viewBox="0 0 42 26" fill="none" stroke="#ececec" strokeWidth="3"><path d="M12 17 H9 A7.5 7.5 0 0 1 9 2 H22 A7.5 7.5 0 0 1 22 17 H19" /><path d="M23 9 H20 A7.5 7.5 0 0 0 20 24 H33 A7.5 7.5 0 0 0 33 9 H31" /></svg>
      </Status>
      <Status $lead={33}>
        <svg width="52" height="24" viewBox="0 0 52 24"><rect x="1" y="1" width="44" height="22" rx="6" fill="none" stroke="#7b7e82" strokeWidth="2" /><rect x="4" y="4" width="38" height="16" rx="3" fill="#ececec" /><path d="M48 8 Q51 12 48 16Z" fill="#7b7e82" /></svg>
      </Status>
      <Status $lead={35}>
        <svg width="26" height="26" viewBox="0 0 26 26" fill="none" stroke="#ececec" strokeWidth="3"><circle cx="10" cy="10" r="8.5" /><path d="M16 16 L24 24" strokeLinecap="round" /></svg>
      </Status>
      <InputMode $lead={40}>A</InputMode>
      <Status $lead={41}>
        <svg width="29" height="28" viewBox="0 0 29 28"><rect x="1" y="1" width="27" height="11" rx="5.5" fill="none" stroke="#ececec" strokeWidth="2" /><circle cx="7" cy="6.5" r="5" fill="#ececec" /><rect y="15" width="29" height="13" rx="6.5" fill="#ececec" /><circle cx="22" cy="21.5" r="4" fill="#14181d" /></svg>
      </Status>
      <Status $lead={35}>
        <svg width="28" height="28" viewBox="0 0 28 28"><defs><radialGradient id="siriGlow"><stop offset="0" stopColor="#fff" /><stop offset="0.35" stopColor="#9fb6e8" stopOpacity="0.7" /><stop offset="1" stopColor="#2b2f46" stopOpacity="0.2" /></radialGradient><linearGradient id="siriBase"><stop offset="0" stopColor="#c03a63" /><stop offset="0.5" stopColor="#4a6aa8" /><stop offset="1" stopColor="#2c8f86" /></linearGradient></defs><circle cx="14" cy="14" r="14" fill="url(#siriBase)" /><circle cx="14" cy="14" r="14" fill="url(#siriGlow)" /></svg>
      </Status>
      <Clock $lead={32}>7月18日 周二</Clock>
      <Clock $lead={18}>15:17</Clock>
    </StatusList>
  </MenuBar>
);

const BrowserBars = () => (
  <>
    <TabStrip>
      <Lights>
        <Light $c="#ee6a5f" $b="#d8584e" aria-label="Close" />
        <Light $c="#f5bd4f" $b="#dba53d" aria-label="Minimise" />
        <Light $c="#61c454" $b="#52ab46" aria-label="Zoom" />
      </Lights>
      <Tab>
        <svg width="33" height="32" viewBox="0 0 33 32">
          <g fill="none" strokeWidth="3"><path stroke="#b3cbe9" d="M3 15 A14 14 0 0 1 17 2 M8 15 A9 9 0 0 1 17 7 M31 16 A14 14 0 0 1 20 30 M26 16 A9 9 0 0 1 20 25" /><path stroke="#2563b5" d="M17 2 A14 14 0 0 1 31 16 M17 7 A9 9 0 0 1 26 16" /></g>
          <circle cx="17" cy="15" r="4" fill="#2563b5" />
          <text x="0" y="31" fontSize="17" fontWeight="700" fill="#e8281c" stroke="#fff" strokeWidth="3" paintOrder="stroke" fontFamily="Liberation Sans, sans-serif">16</text>
        </svg>
        <TabTitle><span>(16) 首页 ·</span><span>RSS</span></TabTitle>
        <IconButton aria-label="Close tab"><MdClose size={26} /></IconButton>
      </Tab>
      <StripButton aria-label="New tab"><MdAdd size={36} /></StripButton>
      <StripButton $push aria-label="Tab search"><Chevron turn={0} size={20} w={4} /></StripButton>
    </TabStrip>
    <AddressBar>
      <IconButton aria-label="Back"><MdArrowBack size={40} /></IconButton>
      <IconButton $c="#9b9b9b" aria-label="Forward"><MdArrowForward size={40} /></IconButton>
      <IconButton aria-label="Reload"><MdRefresh size={40} /></IconButton>
      <Omnibox>
        <IconButton as="span" $c="#5f6065"><MdLock size={26} /></IconButton>
        <UrlField aria-label="Address" />
        <IconButton aria-label="Install" $c="#656565">
          <svg width="40" height="40" viewBox="0 0 40 40" fill="none" stroke="currentColor" strokeWidth="3"><path d="M17 9 H9 Q7.5 9 7.5 10.5 V27 Q7.5 28.5 9 28.5 H31 Q32.5 28.5 32.5 27 V24" /><path d="M25 7 V22 M18.5 16 L25 22.5 L31.5 16" /><path d="M12 31 H28" strokeWidth="5" /></svg>
        </IconButton>
        <IconButton aria-label="Share" $c="#656565">
          <svg width="40" height="40" viewBox="0 0 40 40" fill="none" stroke="currentColor" strokeWidth="3"><path d="M15 15.5 H12 Q10.5 15.5 10.5 17 V31 Q10.5 32.5 12 32.5 H28 Q29.5 32.5 29.5 31 V17 Q29.5 15.5 28 15.5 H25 M20 25 V7 M14.5 12.5 L20 7 L25.5 12.5" /></svg>
        </IconButton>
        <IconButton aria-label="Bookmark" $c="#656565"><MdOutlineStarBorder size={36} /></IconButton>
      </Omnibox>
      <Extensions>
        <ExtSlot aria-label="Bitwarden">
          <svg width="32" height="32" viewBox="0 0 32 32"><rect width="32" height="32" rx="5" fill="#2860db" /><path d="M6 4 H26 V17 Q26 24 16 29 Q6 24 6 17Z" fill="#fff" /><path d="M16 6 H24 V17 Q24 22 16 26Z" fill="#2860db" /></svg>
          <ExtBadge>3</ExtBadge>
        </ExtSlot>
        <ExtSlot aria-label="uBlock Origin">
          <svg width="28" height="32" viewBox="0 0 28 32"><path d="M14 0 Q20 4 28 4 V17 Q28 26 14 32 Q0 26 0 17 V4 Q8 4 14 0Z" fill="#78130c" /><path d="M7 10 V16 Q7 18.5 9.5 18.5 H11.5 V10" fill="none" stroke="#fff" strokeWidth="2.5" /><circle cx="17" cy="14.5" r="4" fill="none" stroke="#fff" strokeWidth="2.5" /></svg>
        </ExtSlot>
        <IconButton aria-label="Extensions"><MdExtension size={34} /></IconButton>
        <IconButton aria-label="Side panel"><svg width="28" height="28" viewBox="0 0 28 28"><path d="M0 0H28V28H0Z M4 4V24H18V4Z" fillRule="evenodd" fill="#202124" /></svg></IconButton>
        <IconButton aria-label="Profile">
          <svg width="44" height="44" viewBox="0 0 44 44"><circle cx="22" cy="22" r="22" fill="#f8eda4" /><path d="M1 29 H43 A22 22 0 0 1 1 29Z" fill="#f9d264" /><path d="M15 13 Q20 9 24 13 L23 20 H26 L30 25 L26 26 L27 34 H15 L16 26 L12 27 L17 20Z" fill="#6b3a1e" /><circle cx="20" cy="15" r="5" fill="#b98a64" /><path d="M26 20 Q30 9 39 9" fill="none" stroke="#5a3520" strokeWidth="1.5" /></svg>
        </IconButton>
        <IconButton aria-label="Menu"><MdMoreVert size={40} /></IconButton>
      </Extensions>
    </AddressBar>
    <Bookmarks>
      <svg width="14" height="12" viewBox="0 0 14 12" fill="none" stroke="#202124" strokeWidth="3"><path d="M1 1 L6 6 L1 11 M8 1 L13 6 L8 11" /></svg>
      <BookmarkRule />
      <Folder>
        <svg width="32" height="26" viewBox="0 0 32 26"><path d="M1 24 V2 Q1 1 2 1 H10 L13 4 H30 Q31 4 31 5 V24 Q31 25 30 25 H2 Q1 25 1 24Z" fill="#fff" stroke="#606060" strokeWidth="2" /><path d="M2 9 H30 V24 H2Z" fill="#cfcfcf" /><path d="M1 8 H31" stroke="#606060" strokeWidth="2" /></svg>
        其他书签
      </Folder>
    </Bookmarks>
  </>
);

export default function App() {
  return (
    <Desktop>
      <Global />
      <Gradients />
      <SystemMenu />
      <Window>
        <BrowserBars />
        <Reader>
          <Sidebar>
            <Brand href="#"><Signal size={60} bright="#fff" dim="#74757a" />FreshRSS</Brand>
            <Manage>
              <ManageButton $w={168}>订阅管理</ManageButton>
              <ManageButton $w={86} aria-label="添加">
                <svg width="18" height="18" viewBox="0 0 18 18"><path d="M9 2 V20 M0 11 H18" stroke="#fff" strokeWidth="3" /></svg>
              </ManageButton>
            </Manage>
            <Categories>
              <Category>
                <CategoryLink href="#"><svg width="28" height="18" viewBox="0 0 28 18" fill="#666"><path d="M5 0H23V4H5zM5 7H23V11H5zM5 14H23V18H5z" /></svg>首页</CategoryLink>
                <Count>16</Count>
              </Category>
              <Category>
                <CategoryLink href="#"><svg width="28" height="28" viewBox="0 0 30 29"><path d={STAR} fill="#666" stroke="#666" /></svg>收藏（1）</CategoryLink>
              </Category>
              <Category>
                <CategoryLink href="#"><IconButton as="span" $c="#6c6d70"><Chevron turn={0} w={3} /></IconButton>新闻</CategoryLink>
                <Count>16</Count>
              </Category>
            </Categories>
            <SideNav>
              <IconButton $c="#77787a" aria-label="Previous"><Chevron turn={90} size={26} w={3} /></IconButton>
              <IconButton $c="#77787a" aria-label="Up"><Chevron turn={180} size={26} w={3} /></IconButton>
              <IconButton $c="#77787a" aria-label="Next"><Chevron turn={-90} size={26} w={3} /></IconButton>
            </SideNav>
          </Sidebar>
          <Column>
            <TopBar>
              <SearchBox>
                <input type="search" aria-label="搜索" placeholder="搜索内容或#标签" />
                <IconButton type="button" $low $c="#77787a" aria-label="搜索">
                  <svg width="28" height="28" viewBox="0 0 28 28" fill="none" stroke="currentColor" strokeWidth="2.5"><circle cx="16.5" cy="11.5" r="10" /><path d="M9.5 18.5 L1.5 26.5" strokeWidth="3.5" /></svg>
                </IconButton>
              </SearchBox>
              <IconButton $low aria-label="设置"><Gear /></IconButton>
            </TopBar>
            <Content>
              <ActionBar>
                <Group>
                  <Action aria-label="已读"><OpenEnvelope /></Action>
                  <Action $on aria-label="未读"><Envelope /></Action>
                  <Action aria-label="收藏"><Star fill="currentColor" w={1} /></Action>
                  <Action aria-label="未收藏"><Star /></Action>
                  <Action $flat aria-label="更多"><Dots /></Action>
                </Group>
                <Group>
                  <Action $wide>标记已读</Action>
                  <Action $flat aria-label="更多"><Dots /></Action>
                </Group>
                <Group>
                  <Action $on aria-label="普通视图"><Lines /></Action>
                  <Action aria-label="全局视图"><Grid9 /></Action>
                  <Action aria-label="阅读视图"><Page /></Action>
                  <Action aria-label="RSS"><Rss /></Action>
                </Group>
                <Group>
                  <Action aria-label="排序"><svg width="20" height="18" viewBox="0 0 20 18"><path d="M10 0 L20 18 H0Z" fill="currentColor" /></svg></Action>
                </Group>
                <Group>
                  <Action aria-label="刷新"><Reload /></Action>
                </Group>
              </ActionBar>
              <DayTitle><span>今天 — 2023年7月18日</span><b>首页</b></DayTitle>
              <Articles>
                {articles.map(([feed, title, time], i) => (
                  <Article key={title} $hover={i === 7}>
                    <RowIcon aria-label="标记已读"><Envelope /></RowIcon>
                    <StarCell aria-label="收藏"><Star /><span>...</span></StarCell>
                    <Feed href="#">{feed === BBC ? <WorldIcon /> : <PiIcon />}{feed}</Feed>
                    <Title href="#">{title}</Title>
                    <Time>{time}</Time>
                    <RowIcon aria-label="打开网站"><Globe /></RowIcon>
                  </Article>
                ))}
              </Articles>
              <EndNote>没有更多文章</EndNote>
              <PageEnd />
              <Bubble />
            </Content>
          </Column>
        </Reader>
      </Window>
      <DockArea>
        <Dock>
          {apps.map((a) => <DockButton key={a.name} entry={a} />)}
          <Divider />
          {places.map((a) => <DockButton key={a.name} entry={a} />)}
        </Dock>
      </DockArea>
    </Desktop>
  );
}
